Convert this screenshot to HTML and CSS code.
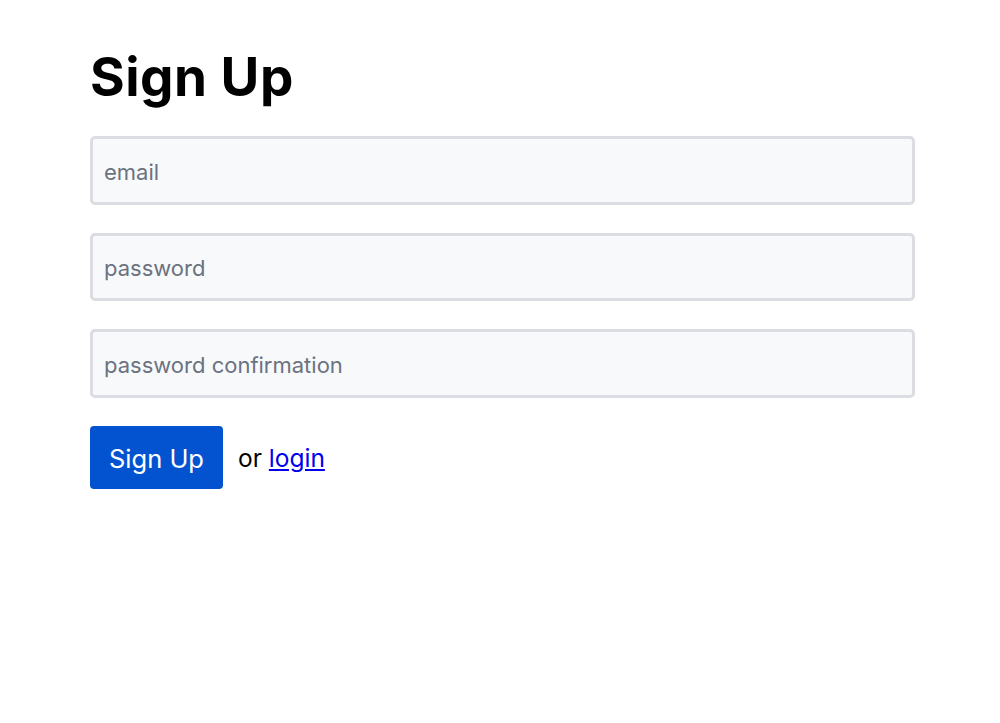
FILE: index.html
```html
<!DOCTYPE html>
<html>
<head>
<meta charset="utf-8">
<link rel="stylesheet" href="styles.css">
</head>
<body>
<main class="page">
  <h1 class="title">Sign Up</h1>
  <form class="form">
    <input class="field" type="email" placeholder="email">
    <input class="field" type="password" placeholder="password">
    <input class="field" type="password" placeholder="password confirmation">
    <div class="actions">
      <button class="btn" type="button">Sign Up</button>
      <span class="alt">or <a href="#" class="link">login</a></span>
    </div>
  </form>
</main>
</body>
</html>
```
FILE: styles.css
```css
html, body {
  margin: 0;
  padding: 0;
  background: #ffffff;
}
body {
  font-family: Inter, "Liberation Sans", sans-serif;
  color: #000;
}
.page {
  width: 825px;
  padding: 44px 0 0 90px;
}
.title {
  margin: 0 0 26px 0;
  font-size: 53px;
  font-weight: 700;
  line-height: 66px;
  letter-spacing: 0.5px;
}
.form {
  display: flex;
  flex-direction: column;
  gap: 28px;
}
.field {
  box-sizing: border-box;
  width: 825px;
  height: 68.5px;
  border: 3px solid #dcdde2;
  border-radius: 5px;
  background: #f8f9fb;
  padding: 3px 11px 0;
  font-family: Inter, "Liberation Sans", sans-serif;
  font-size: 22px;
  color: #333;
  outline: none;
}
.field::placeholder {
  color: #6b7280;
}
.actions {
  display: flex;
  align-items: center;
  gap: 15px;
}
.btn {
  box-sizing: border-box;
  height: 63px;
  width: 133px;
  border: none;
  border-radius: 4px;
  background: #0353d1;
  color: #fff;
  font-family: Inter, "Liberation Sans", sans-serif;
  font-size: 25.5px;
  padding: 2px 0 0;
}
.alt {
  font-size: 24.5px;
  padding-top: 2px;
}
.link {
  color: #0000ee;
}
```
